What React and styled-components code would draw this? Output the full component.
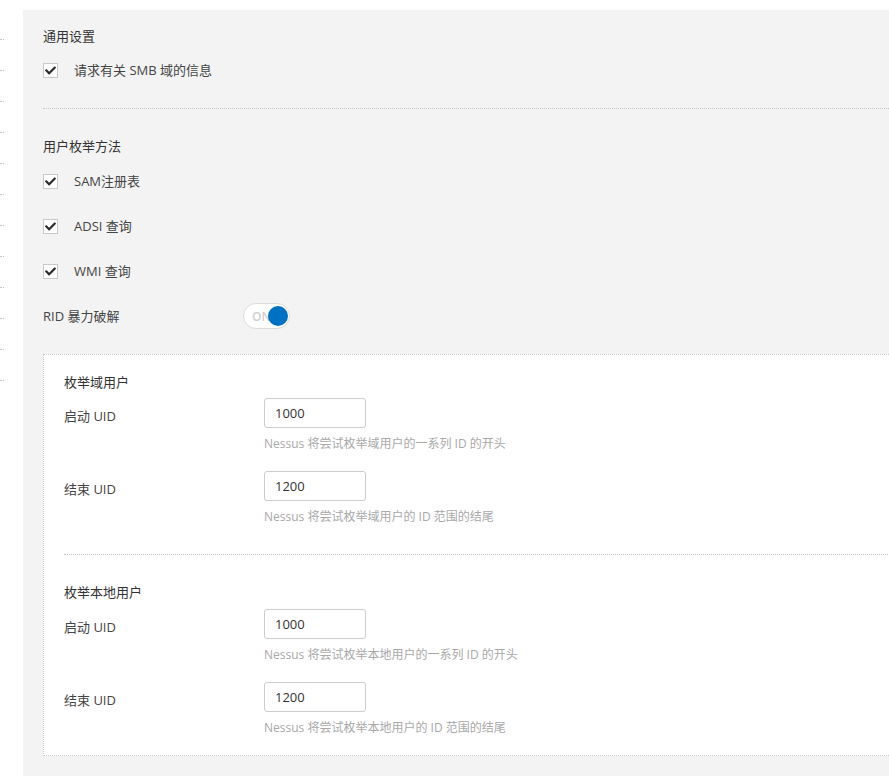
import React from "react";
import styled, { createGlobalStyle } from "styled-components";
import { FaCheck } from "react-icons/fa";

const GlobalStyle = createGlobalStyle`
  html, body {
    margin: 0;
    padding: 0;
    background: #ffffff;
    overflow: hidden;
  }
  body {
    font-family: "Open Sans", "Noto Sans CJK SC", sans-serif;
    font-size: 13px;
    color: #333333;
  }
`;

const groups = [
  {
    title: "枚举域用户",
    fields: [
      { label: "启动 UID", value: "1000", help: "Nessus 将尝试枚举域用户的一系列 ID 的开头" },
      { label: "结束 UID", value: "1200", help: "Nessus 将尝试枚举域用户的 ID 范围的结尾" },
    ],
  },
  {
    title: "枚举本地用户",
    fields: [
      { label: "启动 UID", value: "1000", help: "Nessus 将尝试枚举本地用户的一系列 ID 的开头" },
      { label: "结束 UID", value: "1200", help: "Nessus 将尝试枚举本地用户的 ID 范围的结尾" },
    ],
  },
];

const methods = ["SAM注册表", "ADSI 查询", "WMI 查询"];

const App = () => {
  return (
    <Page>
      <GlobalStyle />
      <SideStrip>
        {Array.from({ length: 12 }).map((_, i) => (
          <SideItem key={i} />
        ))}
      </SideStrip>
      <Panel>
        <Heading>通用设置</Heading>
        <CheckRow gap={15}>
          <Box>
            <FaCheck />
          </Box>
          <span>请求有关 SMB 域的信息</span>
        </CheckRow>
        <Divider />
        <Heading gap={28}>用户枚举方法</Heading>
        {methods.map((m, i) => (
          <CheckRow key={m} gap={i === 0 ? 16 : 25}>
            <Box>
              <FaCheck />
            </Box>
            <span>{m}</span>
          </CheckRow>
        ))}
        <ToggleRow>
          <ToggleLabel>RID 暴力破解</ToggleLabel>
          <Toggle>
            <ToggleText>ON</ToggleText>
            <Knob />
          </Toggle>
        </ToggleRow>
        <Card>
          {groups.map((g, gi) => (
            <Group key={g.title}>
              {gi > 0 && <InnerDivider />}
              <Heading gap={gi > 0 ? 28 : 0}>{g.title}</Heading>
              {g.fields.map((f, fi) => (
                <Field key={f.label} gap={fi === 0 ? (gi > 0 ? 8 : 7) : 19}>
                  <FieldLabel>{f.label}</FieldLabel>
                  <FieldBody>
                    <Input defaultValue={f.value} />
                    <Help>{f.help}</Help>
                  </FieldBody>
                </Field>
              ))}
            </Group>
          ))}
        </Card>
      </Panel>
    </Page>
  );
};

export default App;

const Page = styled.div`
  display: flex;
  align-items: flex-start;
  width: 100%;
`;

const SideStrip = styled.div`
  width: 23px;
  flex-shrink: 0;
  padding-top: 9px;
`;

const SideItem = styled.div`
  width: 4px;
  height: 30px;
  border-bottom: 1px dotted #c8c8c8;
`;

const Panel = styled.div`
  flex: 1;
  margin-top: 10px;
  margin-right: -40px;
  background: #f3f3f3;
  padding: 17px 0 20px 20px;
  display: flex;
  flex-direction: column;
`;

const Heading = styled.div`
  line-height: 18px;
  height: 18px;
  font-size: 13px;
  color: #333;
  margin-top: ${(p) => p.gap || 0}px;
`;

const CheckRow = styled.div`
  display: flex;
  align-items: center;
  height: 20px;
  gap: 16px;
  margin-top: ${(p) => p.gap}px;
  color: #444;
  span {
    line-height: 20px;
  }
`;

const Box = styled.div`
  width: 13px;
  height: 13px;
  border: 1px solid #c9c9c9;
  background: #fff;
  display: flex;
  align-items: center;
  justify-content: center;
  svg {
    width: 11px;
    height: 11px;
    color: #2b2b2b;
  }
`;

const Divider = styled.div`
  margin-top: 28px;
  border-top: 1px dotted #c4c4c4;
`;

const ToggleRow = styled.div`
  display: flex;
  align-items: center;
  height: 26px;
  margin-top: 22px;
`;

const ToggleLabel = styled.div`
  width: 200px;
  color: #444;
  margin-top: -1px;
`;

const Toggle = styled.div`
  position: relative;
  width: 45px;
  height: 24px;
  border: 1px solid #dcdcdc;
  border-radius: 13px;
  background: #fff;
  display: flex;
  align-items: center;
`;

const ToggleText = styled.span`
  margin-left: 8px;
  font-size: 12px;
  color: #cfcfcf;
  font-weight: 600;
`;

const Knob = styled.div`
  position: absolute;
  right: 1px;
  top: 2px;
  width: 20px;
  height: 20px;
  border-radius: 50%;
  background: #0070c3;
`;

const Card = styled.div`
  margin-top: 25px;
  background: #fff;
  border: 1px dotted #c8c8c8;
  padding: 18px 0 19px 20px;
`;

const Group = styled.div`
  display: flex;
  flex-direction: column;
`;

const InnerDivider = styled.div`
  margin-top: 29px;
  border-top: 1px dotted #c4c4c4;
`;

const Field = styled.div`
  display: flex;
  align-items: flex-start;
  margin-top: ${(p) => p.gap}px;
`;

const FieldLabel = styled.div`
  width: 200px;
  padding-top: 9px;
  line-height: 18px;
  color: #444;
`;

const FieldBody = styled.div`
  display: flex;
  flex-direction: column;
`;

const Input = styled.input`
  box-sizing: border-box;
  width: 102px;
  height: 30px;
  border: 1px solid #cccccc;
  border-radius: 3px;
  padding: 0 10px;
  font-family: "Open Sans", sans-serif;
  font-size: 13px;
  color: #333;
  background: #fff;
  outline: none;
`;

const Help = styled.div`
  margin-top: 7px;
  line-height: 17px;
  font-size: 12px;
  color: #a9a9a9;
`;
